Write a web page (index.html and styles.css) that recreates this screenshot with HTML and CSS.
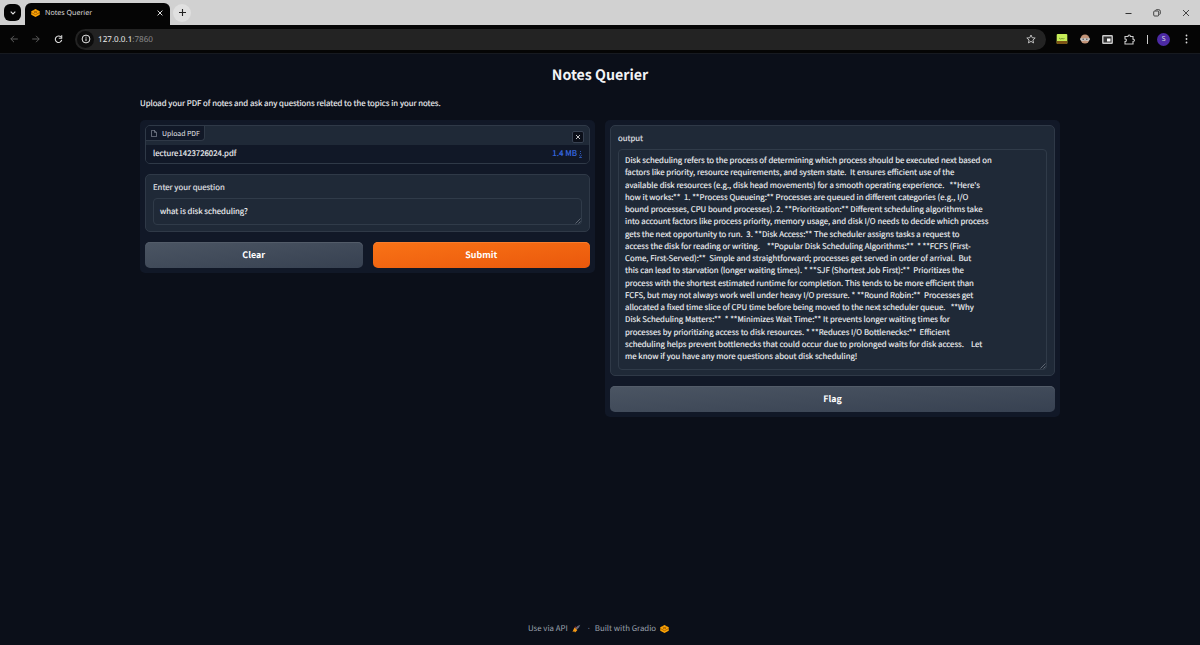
FILE: index.html
```html
<!DOCTYPE html>
<html lang="en">
<head>
<meta charset="utf-8">
<title>Notes Querier</title>
<link rel="stylesheet" href="styles.css">
</head>
<body>
<svg width="0" height="0" class="defs">
  <symbol id="gradio" viewBox="0 0 18 16">
    <path d="M9 0 17.500 4.500v7L9 16 .5 11.500v-7z" fill="#ffa505"/>
    <path d="M.5 7 9 11.500 17.500 7M5 3.500 12 7.500M13 3.500 6 7.500" fill="none" stroke="#7d4500" stroke-width="1.200"/>
  </symbol>
</svg>
<header class="browser">
  <div class="tabs">
    <div class="tab-search"><svg width="6" height="4" viewBox="0 0 6 4"><path d="M.7.7 3 3 5.300.7" fill="none" stroke="#e4e4e4" stroke-width="1.100"/></svg></div>
    <div class="tab">
      <svg class="tab-icon" width="9" height="8"><use href="#gradio"/></svg>
      <span class="tab-title">Notes Querier</span>
      <svg width="6" height="6" viewBox="0 0 6 6"><path d="M.6.6l4.800 4.800M5.400.6.6 5.400" stroke="#ddd" stroke-width="1"/></svg>
    </div>
    <div class="new-tab"><svg width="7" height="7" viewBox="0 0 7 7"><path d="M3.500 0v7M0 3.500h7" stroke="#222" stroke-width="1.100"/></svg></div>
    <div class="window-controls">
      <svg width="7" height="8" viewBox="0 0 7 8"><path d="M.5 4.500h6" stroke="#333" stroke-width="1"/></svg>
      <svg width="8" height="8" viewBox="0 0 8 8" fill="none" stroke="#333" stroke-width=".9"><rect x=".7" y="2" width="5" height="5" rx="1"/><path d="M2.500 1.500Q2.700.7 3.500.7h2.300Q7.300.7 7.300 2.200v2.300q0 .8-.8 1"/></svg>
      <svg width="8" height="8" viewBox="0 0 8 8"><path d="M1 1l6 6M7 1 1 7" stroke="#333" stroke-width=".9"/></svg>
    </div>
  </div>
  <div class="toolbar">
    <div class="nav">
      <svg width="8" height="8" viewBox="0 0 8 8" fill="none" stroke="#5c5c5c"><path d="M7.800 4H.8M4 .8.8 4 4 7.200"/></svg>
      <svg width="8" height="8" viewBox="0 0 8 8" fill="none" stroke="#5c5c5c"><path d="M.2 4h7M4 .8 7.200 4 4 7.200"/></svg>
      <svg width="9" height="8" viewBox="0 0 9 8" fill="none" stroke="#ddd" stroke-width="1.100"><path d="M7 2.200A3.200 3.200 0 1 0 7.700 4.900"/><path d="M7.700.2v3H4.800"/></svg>
    </div>
    <div class="address">
      <div class="info"><svg width="10" height="10" viewBox="0 0 10 10" fill="none" stroke="#e4e4e4"><circle cx="5" cy="5" r="3.900"/><path d="M5 4.400v2.700M5 2.700v1"/></svg></div>
      <span class="url">127.0.0.1<span class="port">:7860</span></span>
      <svg width="10" height="10" viewBox="0 0 10 10" fill="none" stroke="#ccc" stroke-width=".9"><path d="M5 1l1.200 2.700 3 .3-2.300 2 .7 2.900L5 7.400 2.400 8.900l.7-2.900L.8 4l3-.3z"/></svg>
    </div>
    <div class="extensions">
      <svg width="12" height="10" viewBox="0 0 12 10"><rect x=".7" width="10.600" height="10" rx="1" fill="#c6ed58"/><path d="M.7 7h10.600v2q0 1-1 1H1.700q-1 0-1-1z" fill="#7d5415"/><path d="M3 4l1.500 1 1.500-.5L7.500 5l1-1" fill="none" stroke="#65852a" stroke-width=".8"/></svg>
      <svg width="10" height="10" viewBox="0 0 10 10"><circle cx="5" cy="5" r="4.500" fill="#c39478"/><path d="M.2 4.200h9.600v1.600L8 7.200 5 6.500 2 7.200.2 5.800z" fill="#c4c4c4"/><circle cx="3.200" cy="5.300" r=".8" fill="#555"/><circle cx="6.800" cy="5.300" r=".8" fill="#555"/></svg>
      <svg width="11" height="9" viewBox="0 0 11 9"><rect x=".8" y=".8" width="9.400" height="7.400" rx=".5" fill="#333" stroke="#ccc" stroke-width="1.400"/><rect x="5" y="3.500" width="3.500" height="3" fill="#fff"/></svg>
      <svg width="11" height="11" viewBox="0 0 11 11" fill="none" stroke="#ccc" stroke-width="1.100"><path d="M1 2.500h3q0-1.500 1.200-1.500t1.200 1.500H9v2.600q1.400 0 1.400 1.200T9 7.500V10H1V7.600q1.400-.1 1.400-1.400T1 5z"/></svg>
      <span class="divider"></span>
      <span class="avatar">S</span>
      <svg width="3" height="10" viewBox="0 0 3 10" fill="#ddd"><circle cx="1.500" cy="1.500" r=".9"/><circle cx="1.500" cy="5" r=".9"/><circle cx="1.500" cy="8.500" r=".9"/></svg>
    </div>
  </div>
</header>
<main class="app">
  <h1 class="title">Notes Querier</h1>
  <p class="description">Upload your PDF of notes and ask any questions related to the topics in your notes.</p>
  <div class="columns">
    <section class="panel">
      <div class="block file-block">
        <div class="file-head">
          <div class="file-label"><svg width="6" height="7" viewBox="0 0 6 7" fill="none" stroke="#9ca3af" stroke-width=".6"><path d="M.5.4h3l2 2v4.200h-5zM3.500.4v2h2"/></svg><span>Upload PDF</span></div>
          <div class="remove"><svg width="6" height="6" viewBox="0 0 6 6"><path d="M1 1l4 4M5 1 1 5" stroke="#d6d6d6" stroke-width=".9"/></svg></div>
        </div>
        <div class="file-row"><span>lecture1423726024.pdf</span><span class="size">1.4 MB <svg width="3" height="7" viewBox="0 0 3 7" fill="none" stroke="#3566d8" stroke-width=".8"><path d="M1.500 0v1M1.500 2v1M.2 4l1.300 1.200L2.800 4M.2 6.500h2.600"/></svg></span></div>
      </div>
      <div class="block question-block">
        <div class="label">Enter your question</div>
        <div class="field question">what is disk scheduling?<svg class="grip" width="6" height="6" viewBox="0 0 6 6"><path d="M.5 5.500l5-5M3.500 5.500l2-2" stroke="#8b929c" stroke-width=".6"/></svg></div>
      </div>
      <div class="buttons">
        <div class="button">Clear</div>
        <div class="button primary">Submit</div>
      </div>
    </section>
    <section class="panel">
      <div class="block output-block">
        <div class="label">output</div>
        <div class="field output">Disk scheduling refers to the process of determining which process should be executed next based on
factors like priority, resource requirements, and system state.  It ensures efficient use of the
available disk resources (e.g., disk head movements) for a smooth operating experience.   **Here's
how it works:**  1. **Process Queueing:** Processes are queued in different categories (e.g., I/O
bound processes, CPU bound processes). 2. **Prioritization:** Different scheduling algorithms take
into account factors like process priority, memory usage, and disk I/O needs to decide which process
gets the next opportunity to run.  3. **Disk Access:** The scheduler assigns tasks a request to
access the disk for reading or writing.    **Popular Disk Scheduling Algorithms:**  * **FCFS (First-
Come, First-Served):**  Simple and straightforward; processes get served in order of arrival.  But
this can lead to starvation (longer waiting times). * **SJF (Shortest Job First):**  Prioritizes the
process with the shortest estimated runtime for completion. This tends to be more efficient than
FCFS, but may not always work well under heavy I/O pressure. * **Round Robin:**  Processes get
allocated a fixed time slice of CPU time before being moved to the next scheduler queue.   **Why
Disk Scheduling Matters:**  * **Minimizes Wait Time:** It prevents longer waiting times for
processes by prioritizing access to disk resources. * **Reduces I/O Bottlenecks:**  Efficient
scheduling helps prevent bottlenecks that could occur due to prolonged waits for disk access.    Let
me know if you have any more questions about disk scheduling!<svg class="grip" width="6" height="6" viewBox="0 0 6 6"><path d="M.5 5.500l5-5M3.500 5.500l2-2" stroke="#8b929c" stroke-width=".6"/></svg></div>
      </div>
      <div class="button">Flag</div>
    </section>
  </div>
  <footer class="footer">
    <span>Use via API</span>
    <svg class="rocket" width="9" height="9" viewBox="0 0 9 9"><path d="M3 4.500 5.500 2 8.300.7 7 3.500 4.500 6z" fill="#626779"/><path d="M2.500 3.500l2.800 2.800L3 8.500l-.8-1.200L.5 8l.8-2z" fill="#f59a16"/><path d="M2.300 3.200 3.500 2.600 5 4z" fill="#d63d2e"/></svg>
    <span class="dot">·</span>
    <span>Built with Gradio</span>
    <svg class="logo" width="9" height="8"><use href="#gradio"/></svg>
  </footer>
</main>
</body>
</html>
```
FILE: styles.css
```css
* { box-sizing: border-box; }
body {
  margin: 0;
  width: 1200px;
  height: 645px;
  display: flex;
  flex-direction: column;
  overflow: hidden;
  background: #0b0f19;
  color: #f3f4f6;
  font: 7.84px/12.25px "Noto Sans CJK SC", sans-serif;
  text-rendering: geometricPrecision;
}
svg { display: block; flex: none; }
.defs { position: absolute; }

.browser { height: 54px; flex: none; background: #050505; border-bottom: 1px solid #171a20; font-family: "Noto Sans", sans-serif; }
.tabs { height: 25px; display: flex; align-items: center; background: #d1d1d1; }
.tab-search { width: 17px; height: 17px; margin-left: 4px; border-radius: 6px; background: #050505; display: grid; place-items: center; }
.tab { width: 145px; height: 22px; align-self: flex-end; margin-left: 4px; padding: 0 7px 2px 6px; border-radius: 6px 6px 0 0; background: #050505; display: flex; align-items: center; }
.tab-title { flex: 1; margin-left: 5px; padding-top: 1px; font-size: 7.1px; color: #ddd; }
.new-tab { width: 18px; height: 18px; margin-left: 3px; border-radius: 50%; background: #e0e0e0; display: grid; place-items: center; }
.window-controls { display: flex; gap: 21px; margin-left: auto; margin-right: 10px; }
.toolbar { height: 28px; display: flex; align-items: center; }
.nav { width: 75px; padding-left: 10px; display: flex; gap: 14px; }
.address { width: 971px; height: 21px; padding: 0 10px 0 2px; border-radius: 11px; background: #232323; display: flex; align-items: center; }
.info { width: 17px; height: 17px; border-radius: 50%; background: #0c0c0c; display: grid; place-items: center; }
.url { flex: 1; margin-left: 4px; padding-top: 2px; font-size: 8.1px; color: #eee; }
.port { color: #8b8b8b; }
.extensions { flex: 1; display: flex; align-items: center; justify-content: space-between; padding: 0 12px 0 10px; }
.divider { width: 1px; height: 9px; margin-right: -3px; background: #ccc; }
.avatar { width: 13px; height: 13px; margin-right: 3px; border-radius: 50%; background: #4c2aa5; color: #ddd; font-size: 7px; line-height: 13px; text-align: center; }

.app { flex: 1; display: flex; flex-direction: column; width: 920px; margin: 0 auto; }
.title { margin: 11px 0 0; font-size: 14.2px; line-height: 20px; font-weight: 700; text-align: center; }
.description { margin: 12.6px 0 10.4px; }
.description, .file-row, .field, .label { -webkit-text-stroke: .12px currentColor; }
.columns { display: grid; grid-template-columns: 1fr 1fr; gap: 10px; align-items: start; }
.panel { display: flex; flex-direction: column; gap: 10px; padding: 5px; border-radius: 5px; background: #111827; }
.block { border: 1px solid #2f3947; border-radius: 5px; background: #1f2937; }
.file-block { height: 39px; overflow: hidden; }
.file-head { height: 19px; display: flex; justify-content: space-between; }
.file-label { width: 59px; height: 15px; padding-left: 5px; display: flex; align-items: center; gap: 5px; border: solid #2f3947; border-width: 0 1px 1px 0; border-radius: 0 0 4px; background: #111827; color: #e5e7eb; font-size: 6.9px; white-space: nowrap; }
.remove { width: 12px; height: 12px; margin: 5px 5px 0 0; border: 1px solid #374151; border-radius: 2px; background: #0b0f19; display: grid; place-items: center; }
.file-row { height: 18px; padding: 0 7px; display: flex; align-items: center; justify-content: space-between; background: #111827; }
.size { display: flex; align-items: center; gap: 2px; color: #3b72ee; font-size: 8px; }
.question-block { height: 58px; padding: 6px 7px; }
.label { padding-top: .6px; color: #e5e7eb; margin-bottom: 4px; }
.field { position: relative; border: 1px solid #303b49; border-radius: 4px; padding: 6px; white-space: pre; }
.question { height: 27px; padding-top: 7px; }
.output { height: 221px; padding-top: 5px; }
.output-block { height: 251px; padding: 6px 7px; }
.grip { position: absolute; right: 0; bottom: 0; }
.buttons { display: grid; grid-template-columns: 1fr 1fr; gap: 10px; }
.button { height: 26px; border-radius: 5px; background: linear-gradient(to bottom right, #4b5563, #374151); box-shadow: inset 0 1px #535c69; color: #fff; font-size: 8.9px; line-height: 26px; font-weight: 700; text-align: center; }
.primary { background: linear-gradient(to bottom right, #f97316, #ea580c); box-shadow: inset 0 1px #f77d2d; }
.footer { margin: auto 0 10px; display: flex; align-items: center; justify-content: center; color: #9ca3af; padding-right: 3px; }
.rocket { margin-left: 4px; }
.dot { margin: 0 5px 0 7px; font-family: "Open Sans", sans-serif; }
.logo { margin-left: 4px; }
```
